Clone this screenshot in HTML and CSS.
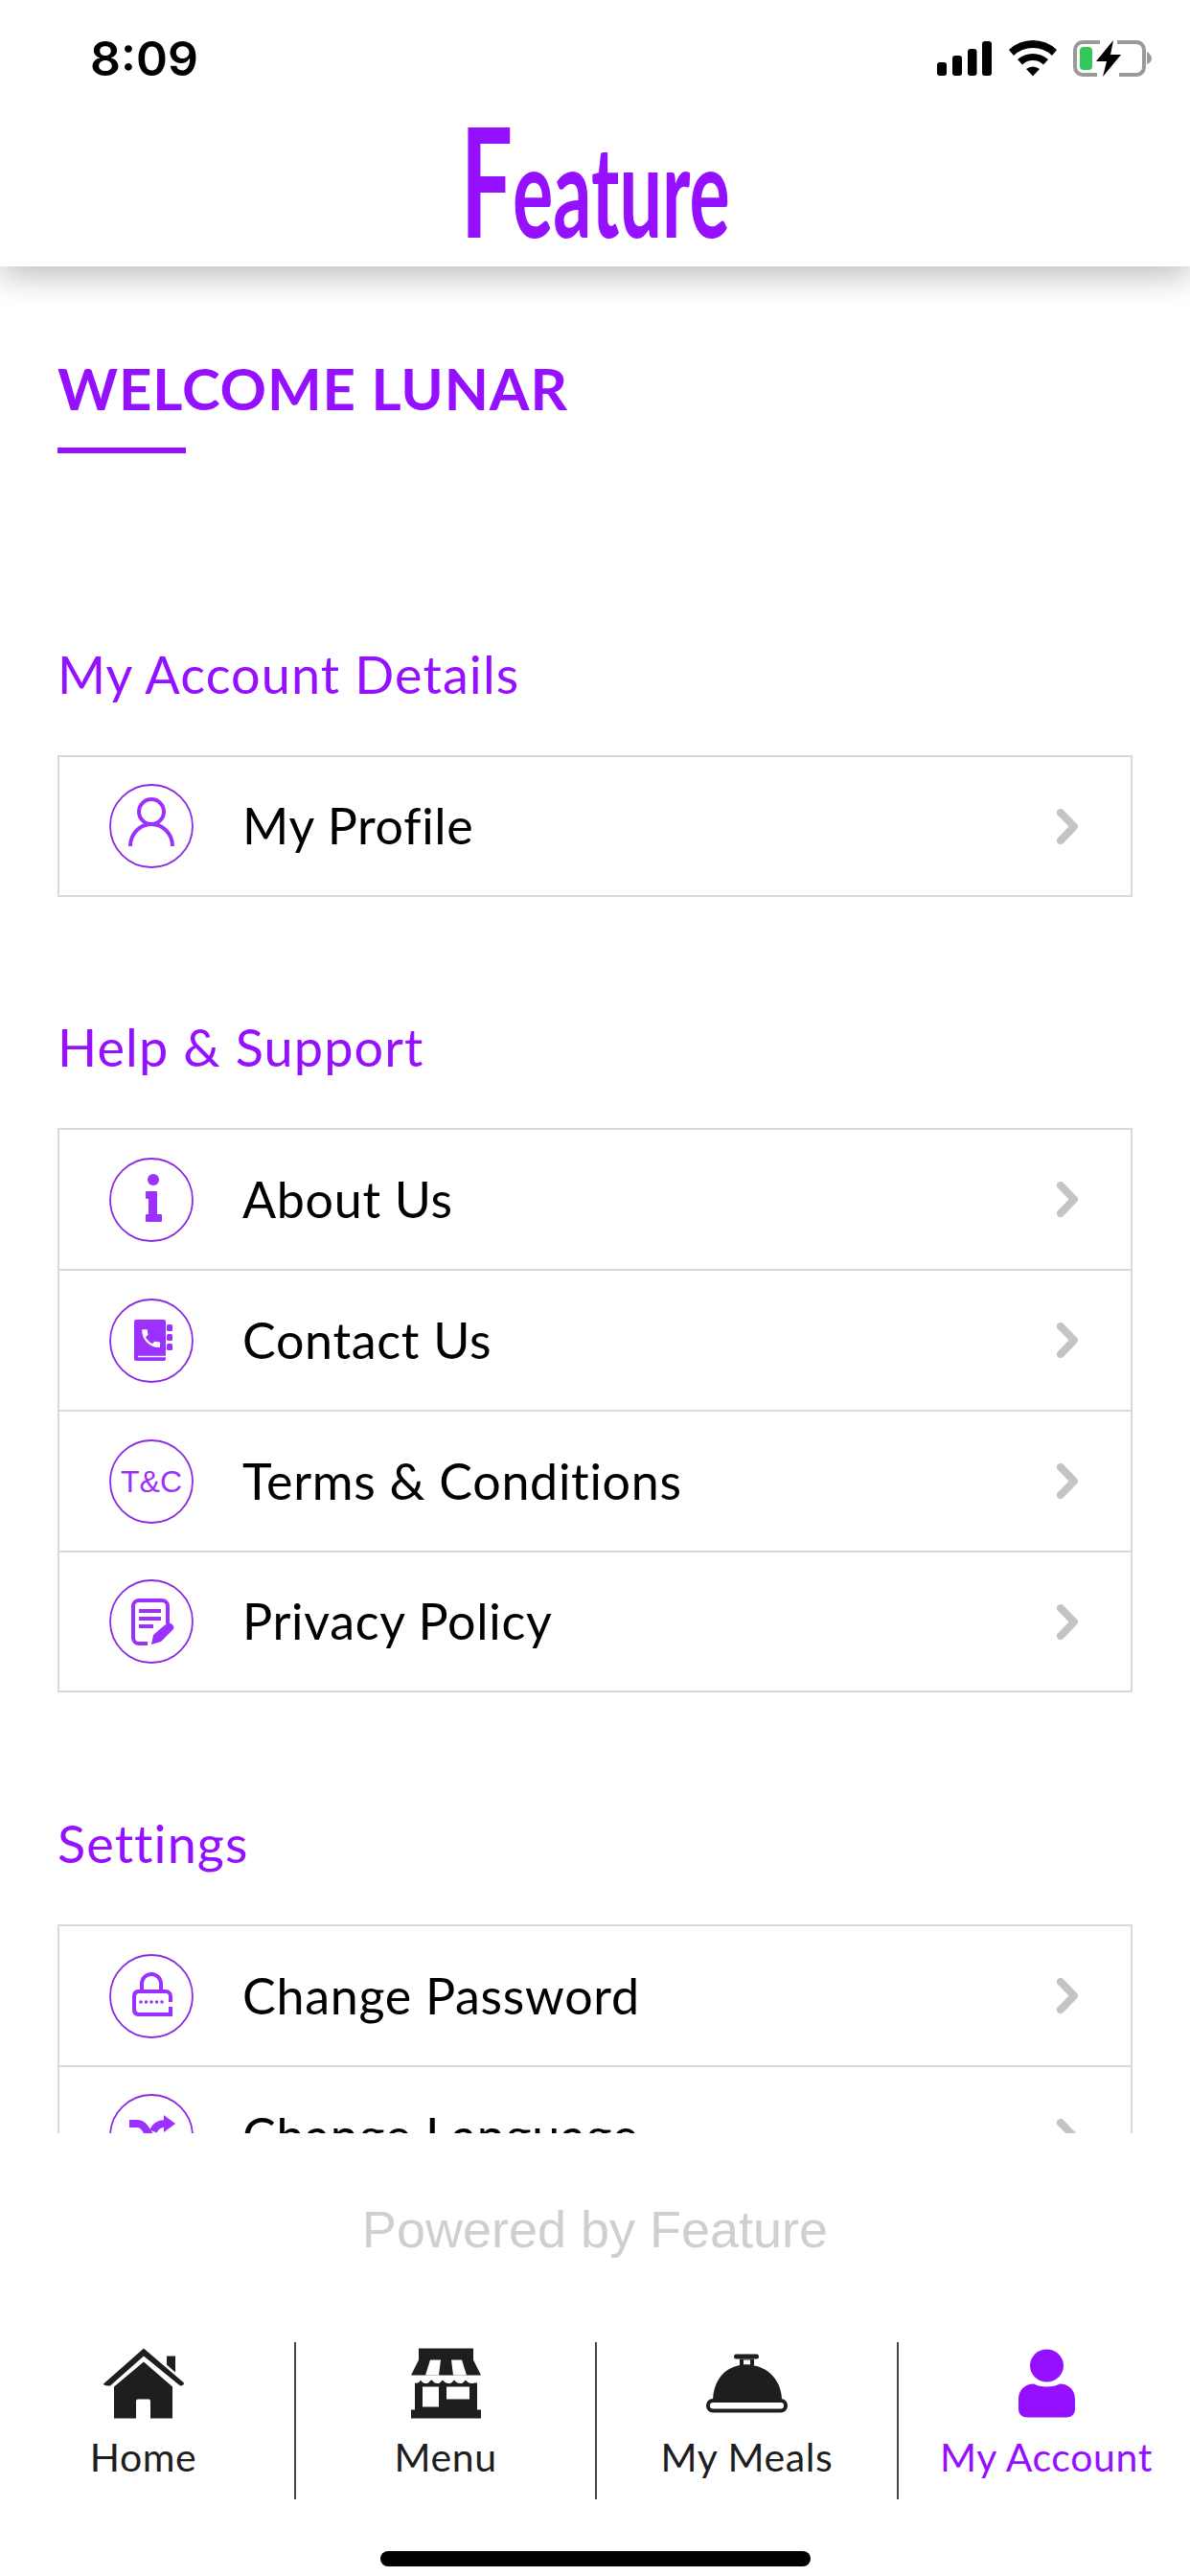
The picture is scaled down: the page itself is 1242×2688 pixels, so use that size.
FILE: index.html
```html
<!DOCTYPE html>
<html lang="en">
<head>
  <meta charset="UTF-8">
  <meta name="viewport" content="width=device-width, initial-scale=1.0">
  <title>My Account</title>
  <link rel="stylesheet" href="styles.css">
</head>
<body>
  <header class="top">
    <div class="status">
      <span class="time">8:09</span>
      <svg class="status-icons" width="224" height="40" viewBox="978 41 224 40">
        <rect x="978" y="65" width="10" height="14" rx="3"/>
        <rect x="994" y="58" width="10" height="21" rx="3"/>
        <rect x="1010" y="51" width="9.5" height="28" rx="3"/>
        <rect x="1025" y="43" width="10" height="36" rx="3"/>
        <path d="M1053 52 A36 36 0 0 1 1103 52 L1098 58 A29 29 0 0 0 1058 58 Z"/>
        <path d="M1062 62 A24 24 0 0 1 1094 62 L1089 67.5 A16 16 0 0 0 1067 67.5 Z"/>
        <path d="M1071 72 A11 11 0 0 1 1085 72 L1078 79.5 Z"/>
        <path class="batt" d="M1148 44 H1130 A8 8 0 0 0 1122 52 V70 A8 8 0 0 0 1130 78 H1145 M1168 78 H1187 A8 8 0 0 0 1194 70 V52 A8 8 0 0 0 1187 44 H1166"/>
        <rect class="batt-level" x="1127" y="49" width="13" height="24" rx="4"/>
        <path class="batt-cap" d="M1197 54 C1200 56 1202 58 1202 61 C1202 64 1200 66 1197 67 Z"/>
        <path d="M1162 42 L1144 64 H1155 L1151 80 L1170 57 H1159 Z"/>
      </svg>
    </div>
    <div class="logo"><span class="logo-word"><span class="logo-cap">F</span>eature</span></div>
  </header>

  <main class="content">
    <h1>WELCOME LUNAR</h1>
    <div class="rule"></div>

    <h2 class="first">My Account Details</h2>
    <div class="list">
      <div class="row">
        <svg class="ic" viewBox="0 0 88 88">
          <circle class="ring" cx="44" cy="44" r="43"/>
          <circle class="line" cx="44" cy="29" r="13"/>
          <path class="line" d="M22 65 C22 52 32 42 44 42 S66 52 66 65"/>
        </svg>
        <span class="label">My Profile</span>
        <svg class="chev" width="22" height="37" viewBox="0 0 22 37"><path d="M4 4 L18 18.5 L4 33"/></svg>
      </div>
    </div>

    <h2>Help &amp; Support</h2>
    <div class="list">
      <div class="row">
        <svg class="ic" viewBox="0 0 88 88">
          <circle class="ring" cx="44" cy="44" r="43"/>
          <circle class="fill" cx="46" cy="23" r="6"/>
          <path class="fill" d="M39 35 H49 A1.500 1.500 0 0 1 50 36 V59 H54 A1 1 0 0 1 55 60 V66 A1 1 0 0 1 54 67 H39 A1 1 0 0 1 38 66 V60 A1 1 0 0 1 39 59 H41 V43 H39 A1 1 0 0 1 38 42 V36 A1 1 0 0 1 39 35 Z"/>
        </svg>
        <span class="label">About Us</span>
        <svg class="chev" width="22" height="37" viewBox="0 0 22 37"><path d="M4 4 L18 18.5 L4 33"/></svg>
      </div>
      <div class="row">
        <svg class="ic" viewBox="0 0 88 88">
          <circle class="ring" cx="44" cy="44" r="43"/>
          <rect class="fill" x="26" y="22" width="33" height="43" rx="2"/>
          <rect class="fill" x="60" y="27" width="6" height="7" rx="1.500"/>
          <rect class="fill" x="60" y="37" width="6" height="7" rx="1.500"/>
          <rect class="fill" x="60" y="47" width="6" height="7" rx="1.500"/>
          <path class="gap" d="M30 60.500 H59"/>
          <path class="hole" transform="translate(31 29) scale(1.050)" d="M6.620 10.790c1.440 2.830 3.760 5.140 6.590 6.590l2.200-2.200c.27-.27.67-.36 1.020-.24 1.120.37 2.330.57 3.570.57.55 0 1 .45 1 1V20c0 .55-.45 1-1 1-9.390 0-17-7.610-17-17 0-.55.45-1 1-1h3.500c.55 0 1 .45 1 1 0 1.250.2 2.450.57 3.570.11.35.03.74-.25 1.020l-2.200 2.200z"/>
        </svg>
        <span class="label">Contact Us</span>
        <svg class="chev" width="22" height="37" viewBox="0 0 22 37"><path d="M4 4 L18 18.5 L4 33"/></svg>
      </div>
      <div class="row">
        <svg class="ic" viewBox="0 0 88 88">
          <circle class="ring" cx="44" cy="44" r="43"/>
          <text class="ic-text" x="44" y="55" text-anchor="middle">T&amp;C</text>
        </svg>
        <span class="label">Terms &amp; Conditions</span>
        <svg class="chev" width="22" height="37" viewBox="0 0 22 37"><path d="M4 4 L18 18.5 L4 33"/></svg>
      </div>
      <div class="row">
        <svg class="ic" viewBox="0 0 88 88">
          <circle class="ring" cx="44" cy="44" r="43"/>
          <path class="line" d="M40 67 H31 A6 6 0 0 1 25 61 V28 A6 6 0 0 1 31 22 H55 A6 6 0 0 1 61 28 V46"/>
          <path class="line" d="M31 33 H54 M31 41 H54 M31 49 H46"/>
          <path class="fill" d="M44 68 L46 58 L60 46 C63 44 69 48 67 52 L54 65 Z"/>
        </svg>
        <span class="label">Privacy Policy</span>
        <svg class="chev" width="22" height="37" viewBox="0 0 22 37"><path d="M4 4 L18 18.5 L4 33"/></svg>
      </div>
    </div>

    <h2 class="settings">Settings</h2>
    <div class="list">
      <div class="row">
        <svg class="ic" viewBox="0 0 88 88">
          <circle class="ring" cx="44" cy="44" r="43"/>
          <path class="line" d="M64 55 V63 H30 A5 5 0 0 1 26 58 V44 A5 5 0 0 1 30 39 H59 A5 5 0 0 1 64 44 V50"/>
          <path class="line" d="M34 39 V31 A10 10 0 0 1 54 31 V39"/>
          <circle class="fill" cx="33" cy="50" r="1.800"/>
          <circle class="fill" cx="38.500" cy="50" r="1.800"/>
          <circle class="fill" cx="44" cy="50" r="1.800"/>
          <circle class="fill" cx="49.500" cy="50" r="1.800"/>
          <circle class="fill" cx="55" cy="50" r="1.800"/>
        </svg>
        <span class="label">Change Password</span>
        <svg class="chev" width="22" height="37" viewBox="0 0 22 37"><path d="M4 4 L18 18.5 L4 33"/></svg>
      </div>
      <div class="row">
        <svg class="ic" viewBox="0 0 88 88">
          <circle class="ring" cx="44" cy="44" r="43"/>
          <path class="line-thick" d="M21 31 H29 C36 31 38 37 42 43"/>
          <path class="line-thick" d="M46 39 C48 34 52 31 58 31"/>
          <path class="fill" d="M57 22 L69 31 L57 40 Z"/>
        </svg>
        <span class="label">Change Language</span>
        <svg class="chev" width="22" height="37" viewBox="0 0 22 37"><path d="M4 4 L18 18.5 L4 33"/></svg>
      </div>
    </div>
  </main>

  <footer class="bottom">
    <div class="powered">Powered by Feature</div>
    <nav class="tabs">
      <div class="tab tab-home">
        <svg class="tab-ic" width="84" height="73" viewBox="0 0 84 73">
          <path d="M42 0 L84 36 Q84 39 80 39 L42 8 L7 39 Q0 39 0 37 Z"/>
          <path d="M66 8 H75 V25 L66 17 Z"/>
          <path d="M42 14 L72 40 V73 H49 V55 Q49 53 47 53 H36 Q34 53 34 55 V73 H11 V40 Z"/>
        </svg>
        <span>Home</span>
      </div>
      <div class="tab">
        <svg class="tab-ic" width="73" height="73" viewBox="0 0 73 73">
          <path d="M8 0 H65 V12 L73 28 H0 L8 12 Z"/>
          <path class="cut" d="M20 12 H31 L29 28 H15 Z M42 12 H53 L58 28 H44 Z"/>
          <path fill-rule="evenodd" d="M4 36 Q8 37 10 33 Q13 38 18 36 Q20 33 22 33 Q25 38 30 36 L33 33 Q37 38 42 36 L45 33 Q49 38 54 36 L57 33 Q61 38 66 36 L69 36 V64 H73 V73 H0 V64 H4 Z M12 40 V61 H29 V40 Z M37 40 V53 H61 V40 Z"/>
        </svg>
        <span>Menu</span>
      </div>
      <div class="tab">
        <svg class="tab-ic" width="85" height="61" viewBox="0 0 85 61">
          <rect x="29" y="0" width="26" height="5" rx="2.500"/>
          <path fill-rule="evenodd" d="M35 5 H50 V12 H35 Z M39 6 V11 H46 V6 Z"/>
          <path d="M7 47 C8 25 22 11 42 11 C62 11 78 25 79 47 Z"/>
          <rect class="bell-base" x="2" y="48.500" width="81" height="10.500" rx="5"/>
        </svg>
        <span>My Meals</span>
      </div>
      <div class="tab tab-account active">
        <svg class="tab-ic" width="59" height="71" viewBox="0 0 59 71">
          <ellipse cx="29.500" cy="17" rx="17.500" ry="17"/>
          <path d="M16 36 C22 40 37 40 43 36 C52 36 59 42 59 52 V62 C59 68 55 71 50 71 H9 C4 71 0 68 0 62 V52 C0 42 7 36 16 36 Z"/>
        </svg>
        <span>My Account</span>
      </div>
    </nav>
    <div class="home-bar"></div>
  </footer>
</body>
</html>
```

FILE: styles.css
```css
body {
  margin: 0;
  width: 1242px;
  height: 2688px;
  overflow: hidden;
  display: flex;
  flex-direction: column;
  font-family: Lato, sans-serif;
  background-color: #ffffff;
  color: #000000;
}

/* header */
.top {
  height: 278px;
  flex: none;
  position: relative;
  z-index: 2;
  background-color: #ffffff;
  box-shadow: 0 10px 32px rgba(0, 0, 0, 0.26);
}

.status {
  height: 112px;
  padding: 31px 40px 0 94px;
  box-sizing: border-box;
  display: flex;
  justify-content: space-between;
  align-items: flex-start;
}

.time {
  font-family: Inter, sans-serif;
  font-weight: 600;
  font-size: 50px;
  line-height: 60px;
}

.status-icons {
  margin-top: 10px;
}

.batt {
  fill: none;
  stroke: #9a9a9a;
  stroke-width: 4;
}

.batt-level {
  fill: #34c759;
}

.batt-cap {
  fill: #9a9a9a;
}

.logo {
  text-align: center;
  color: #9510ff;
  height: 156px;
}

.logo-word {
  display: inline-block;
  font-family: Lato, sans-serif;
  font-weight: 700;
  font-size: 132px;
  line-height: 148px;
  letter-spacing: 0;
  transform: scaleX(0.6);
}

.logo-cap {
  font-size: 160px;
}

/* scrolling part */
.content {
  height: 1948px;
  flex: none;
  overflow: hidden;
  padding: 97px 60px 0;
  box-sizing: border-box;
}

h1 {
  margin: 0;
  font-size: 60px;
  font-weight: 700;
  line-height: 60px;
  letter-spacing: 0.9px;
  color: #9510ff;
}

.rule {
  width: 134px;
  height: 6px;
  margin-top: 32px;
  background-color: #9510ff;
}

h2 {
  margin: 127px 0 54px;
  font-size: 54px;
  font-weight: 400;
  line-height: 60px;
  letter-spacing: 1.1px;
  color: #9510ff;
}

h2.first {
  margin-top: 201px;
}

h2.settings {
  margin-top: 128px;
}

.list {
  border-bottom: 2px solid #d9d9d9;
}

.row {
  height: 147px;
  box-sizing: border-box;
  padding: 0 55px 0 52px;
  display: flex;
  align-items: center;
  border: 2px solid #d9d9d9;
  border-bottom: none;
}

.row:last-child {
  height: 146px;
}

.ic {
  width: 88px;
  height: 88px;
  flex: none;
  margin-right: 51px;
}

.ring {
  fill: none;
  stroke: #8a2be2;
  stroke-width: 1.800;
}

.line {
  fill: none;
  stroke: #9b30ff;
  stroke-width: 4;
}

.line-thick {
  fill: none;
  stroke: #9b30ff;
  stroke-width: 8;
}

.fill {
  fill: #9b30ff;
}

.gap {
  stroke: #ffffff;
  stroke-width: 1.500;
}

.hole {
  fill: #ffffff;
}

.ic-text {
  font-family: "Liberation Sans", sans-serif;
  font-size: 32px;
  fill: #9b30ff;
}

.label {
  flex: 1;
  font-size: 52px;
  line-height: 60px;
  letter-spacing: 0.7px;
  padding-bottom: 2px;
}

.chev path {
  fill: none;
  stroke: #c4c4c4;
  stroke-width: 8;
  stroke-linecap: round;
  stroke-linejoin: round;
}

/* bottom bar */
.bottom {
  flex: 1;
  background-color: #ffffff;
}

.powered {
  margin-top: 70px;
  text-align: center;
  font-family: "Liberation Sans", sans-serif;
  font-size: 54px;
  line-height: 60px;
  color: #cfcfcf;
}

.tabs {
  margin-top: 88px;
  height: 164px;
  display: grid;
  grid-template-columns: 307px 314px 315px 306px;
}

.tab {
  display: flex;
  flex-direction: column;
  align-items: center;
  border-left: 2px solid #444444;
  color: #1e1e1e;
  fill: #1e1e1e;
  font-size: 41px;
  line-height: 48px;
  letter-spacing: 0.6px;
}

.tab-home {
  border-left: none;
  padding-right: 8px;
}

.tab-account {
  padding-left: 4px;
}

.tab-ic {
  height: 74px;
  margin: 6px 0 16px;
}

.cut {
  fill: #ffffff;
}

.bell-base {
  fill: #ffffff;
  stroke: #1e1e1e;
  stroke-width: 4;
}

.active {
  color: #9510ff;
  fill: #9510ff;
}

.home-bar {
  width: 449px;
  height: 16px;
  margin: 54px auto 0;
  border-radius: 8px;
  background-color: #000000;
}
```
